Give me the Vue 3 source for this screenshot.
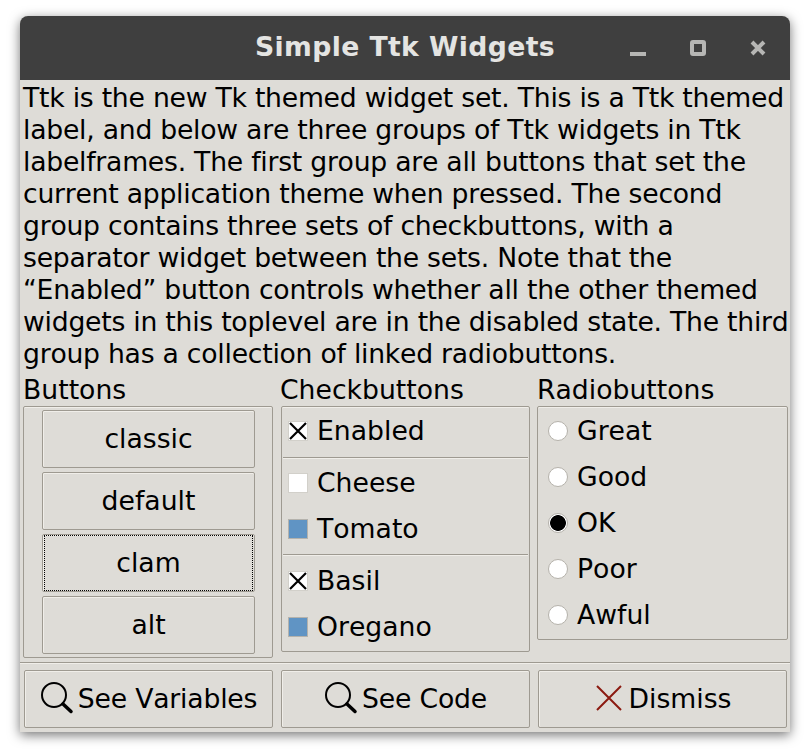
<template>
  <div class="desktop">
    <div class="window">
      <div class="titlebar">
        <div class="title">Simple Ttk Widgets</div>
        <div class="win-controls">
          <svg width="16" height="16" viewBox="0 0 16 16"><rect x="0" y="12" width="16" height="4" fill="#b6b6b4" /></svg>
          <svg width="16" height="16" viewBox="0 0 16 16"><rect x="2" y="2" width="12" height="12" rx="1" fill="none" stroke="#b6b6b4" stroke-width="4" /></svg>
          <svg width="16" height="16" viewBox="0 0 16 16"><path d="M2 2 L14 14 M14 2 L2 14" stroke="#b6b6b4" stroke-width="4" fill="none" /></svg>
        </div>
      </div>

      <div class="content">
        <p class="msg">Ttk is the new Tk themed widget set. This is a Ttk themed<br>label, and below are three groups of Ttk widgets in Ttk<br>labelframes. The first group are all buttons that set the<br>current application theme when pressed. The second<br>group contains three sets of checkbuttons, with a<br>separator widget between the sets. Note that the<br>“Enabled” button controls whether all the other themed<br>widgets in this toplevel are in the disabled state. The third<br>group has a collection of linked radiobuttons.</p>

        <div class="groups">
          <div class="group">
            <div class="group-label">Buttons</div>
            <div class="frame buttons-frame">
              <button v-for="t in themes" :key="t" class="btn" :class="{ focused: t === 'clam' }">
                <span class="focus-ring">{{ t }}</span>
              </button>
            </div>
          </div>

          <div class="group">
            <div class="group-label">Checkbuttons</div>
            <div class="frame checks-frame">
              <div v-for="(set, i) in checkSets" :key="i" class="check-set">
                <div v-for="c in set" :key="c.name" class="row">
                  <span class="check" :class="c.state">
                    <svg v-if="c.state === 'on'" width="20" height="20" viewBox="0 0 20 20"><path d="M2 2 L18 18 M18 2 L2 18" stroke="#000" stroke-width="2.2" fill="none" /></svg>
                  </span>
                  {{ c.name }}
                </div>
              </div>
            </div>
          </div>

          <div class="group">
            <div class="group-label">Radiobuttons</div>
            <div class="frame radios-frame">
              <div v-for="r in radios" :key="r" class="row">
                <span class="radio" :class="{ on: r === 'OK' }"></span>
                {{ r }}
              </div>
            </div>
          </div>
        </div>

        <div class="footer">
          <button class="btn foot-btn">
            <svg class="ico" width="34" height="34" viewBox="0 0 34 34"><circle cx="14" cy="14" r="12" fill="none" stroke="#000" stroke-width="2" /><path d="M23 23 L31 30.5" stroke="#000" stroke-width="3.5" stroke-linecap="round" /></svg>
            See Variables
          </button>
          <button class="btn foot-btn">
            <svg class="ico" width="34" height="34" viewBox="0 0 34 34"><circle cx="14" cy="14" r="12" fill="none" stroke="#000" stroke-width="2" /><path d="M23 23 L31 30.5" stroke="#000" stroke-width="3.5" stroke-linecap="round" /></svg>
            See Code
          </button>
          <button class="btn foot-btn dismiss">
            <svg class="ico" width="26" height="26" viewBox="0 0 26 26"><path d="M1 1 L25 25 M25 1 L1 25" stroke="#8b1a10" stroke-width="2" fill="none" /></svg>
            Dismiss
          </button>
        </div>
      </div>
    </div>
  </div>
</template>

<script setup>
const themes = ['classic', 'default', 'clam', 'alt']

const checkSets = [
  [{ name: 'Enabled', state: 'on' }],
  [{ name: 'Cheese', state: 'off' }, { name: 'Tomato', state: 'mixed' }],
  [{ name: 'Basil', state: 'on' }, { name: 'Oregano', state: 'mixed' }]
]

const radios = ['Great', 'Good', 'OK', 'Poor', 'Awful']
</script>

<style>
html, body {
  margin: 0;
  background: #fff;
}
</style>

<style scoped>
.desktop {
  width: 811px;
  height: 754px;
  box-sizing: border-box;
  padding: 16px 21px 22px 20px;
  overflow: hidden;
  font-family: "DejaVu Sans", sans-serif;
  font-size: 26.67px;
  font-kerning: none;
  color: #000;
}

.window {
  height: 716px;
  display: flex;
  flex-direction: column;
  background: #dedcd7;
  border-radius: 8px 8px 0 0;
  box-shadow: 0 3px 12px rgba(0, 0, 0, 0.55);
}

.titlebar {
  height: 64px;
  flex: none;
  position: relative;
  display: flex;
  align-items: center;
  justify-content: center;
  background: #3f3f3f;
  border-radius: 8px 8px 0 0;
}

.title {
  font-weight: 700;
  font-size: 26.67px;
  color: #e4e4e2;
  letter-spacing: 0.4px;
  padding-bottom: 4px;
}

.win-controls {
  position: absolute;
  right: 24px;
  top: 24px;
  display: flex;
  gap: 44px;
}

.win-controls svg {
  display: block;
}

.content {
  flex: 1;
  display: flex;
  flex-direction: column;
  padding: 2px 2px 0 3px;
}

.msg {
  margin: 0;
  line-height: 32px;
  white-space: nowrap;
  letter-spacing: -0.25px;
}

.groups {
  display: grid;
  grid-template-columns: 250px 249px 250px;
  column-gap: 8px;
  align-items: start;
  margin-top: 4px;
  height: 284px;
}

.groups .group:nth-child(2) .group-label {
  margin-left: -1px;
}

.groups .group:nth-child(3) {
  margin-left: -1px;
  width: 251px;
}

.group-label {
  height: 32px;
  line-height: 32px;
}

.frame {
  box-sizing: border-box;
  border: 1px solid #9e9a91;
  border-radius: 2px;
  box-shadow: inset 0 1px 0 #f0eee9;
}

.buttons-frame {
  height: 252px;
  padding: 3px 17px 3px 18px;
  display: flex;
  flex-direction: column;
  gap: 4px;
}

.btn {
  box-sizing: border-box;
  display: flex;
  align-items: center;
  justify-content: center;
  height: 58px;
  padding: 0 0 2px;
  font: inherit;
  font-kerning: none;
  color: #000;
  background: #dedcd7;
  border: 1px solid #9e9a91;
  border-radius: 2px;
  box-shadow: inset 0 1px 0 #f0eee9, inset 1px 0 0 #f0eee9;
}

.focused {
  padding: 0;
}

.focus-ring {
  box-sizing: border-box;
  width: 100%;
  height: 100%;
  display: flex;
  align-items: center;
  justify-content: center;
  margin: 1px;
}

.focused .focus-ring {
  border: 1px dotted #000;
  padding-bottom: 2px;
}

.checks-frame {
  height: 246px;
}

.check-set {
  box-sizing: border-box;
  border-top: 1px solid #9e9a91;
  box-shadow: inset 0 1px 0 #f0eee9;
  margin: 0 1px;
  padding: 2px 0 2px;
}

.check-set:first-child {
  height: 50px;
  border-top: 0;
  box-shadow: none;
  padding: 1px 0 0;
}

.check-set:last-child {
  padding-top: 3px;
}

.checks-frame .row {
  padding-left: 5px;
}

.row {
  height: 46px;
  display: flex;
  align-items: center;
  gap: 9px;
  line-height: 46px;
}

.check {
  box-sizing: border-box;
  width: 20px;
  height: 20px;
  flex: none;
  display: block;
  background: #fff;
  outline: 1px solid #d2d0ca;
  outline-offset: -1px;
}

.check svg {
  display: block;
}

.check.mixed {
  background: #6094c4;
  outline-color: #b4b2ac;
}

.radios-frame {
  height: 234px;
  padding: 1px 0 0 10px;
}

.radio {
  box-sizing: border-box;
  width: 20px;
  height: 20px;
  flex: none;
  border-radius: 50%;
  background: #fff;
  border: 1px solid #b5b2ab;
}

.radio.on {
  background: radial-gradient(circle, #000 0, #000 7.5px, #fff 8.2px);
}

.footer {
  margin-top: 4px;
  border-top: 1px solid #9e9a91;
  box-shadow: inset 0 1px 0 #f0eee9;
  margin-left: -3px;
  margin-right: -2px;
  padding: 7px 3px 0 4px;
  display: grid;
  grid-template-columns: 249px 249px 249px;
  column-gap: 8px;
}

.foot-btn {
  gap: 4px;
  letter-spacing: -0.2px;
}

.dismiss {
  gap: 7px;
  padding-left: 2px;
  letter-spacing: 0;
}

.ico {
  flex: none;
}
</style>
